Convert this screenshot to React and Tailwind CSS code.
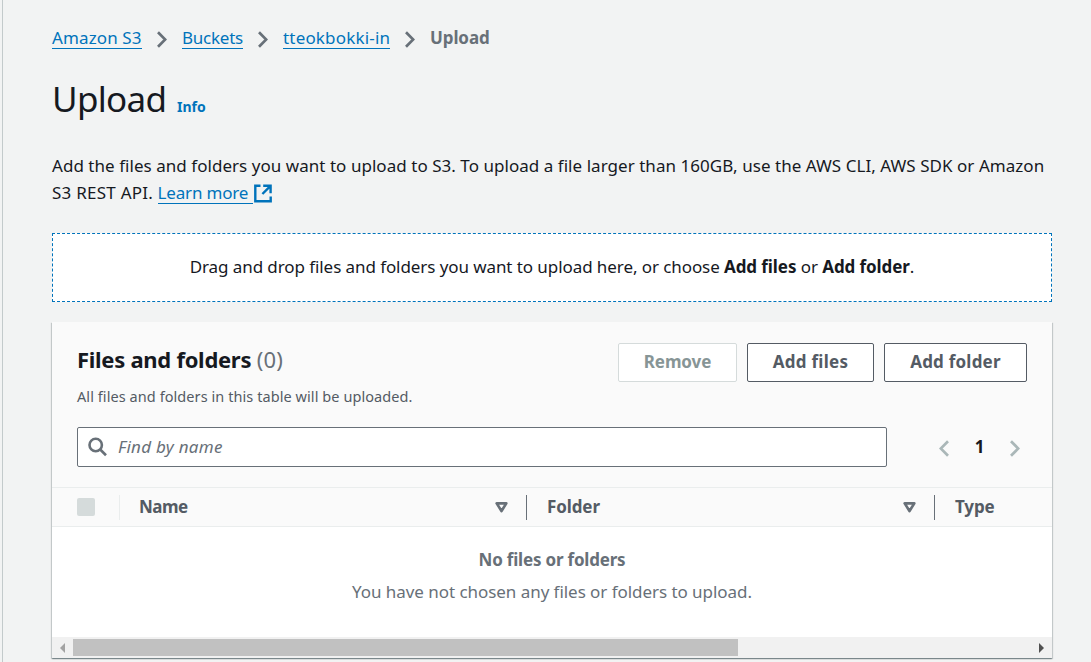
import React from "react";

function Chevron({ className = "", flip = false }) {
  return (
    <svg className={className} width="10" height="17" viewBox="0 0 10 17" fill="none" stroke="currentColor" strokeWidth="2.7">
      <path d={flip ? "M9 1.2L1.8 8.5L9 15.8" : "M1 1.2L8.2 8.5L1 15.8"} />
    </svg>
  );
}

function Crumb({ className, children }) {
  return (
    <a className={"h-[21px] shrink-0 whitespace-nowrap border-b border-[#0073bb] leading-[19px] text-[#0073bb] " + className}>
      {children}
    </a>
  );
}

function SortIcon() {
  return (
    <svg className="shrink-0" width="13" height="12" viewBox="0 0 13 12" fill="none" stroke="#687078" strokeWidth="2.7" strokeLinejoin="round">
      <path d="M1.7 2.4H11.3L6.5 10Z" />
    </svg>
  );
}

function Button({ className, children }) {
  return (
    <button className={"flex h-[39px] shrink-0 items-center justify-center whitespace-nowrap rounded-[2px] border bg-white pb-px font-bold " + className}>
      {children}
    </button>
  );
}

function Breadcrumbs() {
  return (
    <nav className="flex h-[21px] items-start">
      <Crumb className="w-[90px] tracking-[0.12px]">Amazon S3</Crumb>
      <Chevron className="ml-[15px] mt-[3px] text-[#687078]" />
      <Crumb className="ml-[15px] w-[61px] tracking-[-0.25px]">Buckets</Crumb>
      <Chevron className="ml-[15px] mt-[3px] text-[#687078]" />
      <Crumb className="ml-[15px] w-[107px] tracking-[0.18px]">tteokbokki-in</Crumb>
      <Chevron className="ml-[15px] mt-[3px] text-[#687078]" />
      <span className="ml-[15px] font-bold leading-[19px] tracking-[-0.1px] text-[#687078]">Upload</span>
    </nav>
  );
}

function FilesCard() {
  return (
    <section className="mt-5 flex h-[336px] w-[1000px] flex-col bg-white shadow-[0_1px_1px_0_rgba(0,28,36,0.3),1px_1px_1px_0_rgba(0,28,36,0.15),-1px_1px_1px_0_rgba(0,28,36,0.15)]">
      <div className="flex h-[165px] flex-col bg-[#fafafa] px-[25px] pt-[21px]">
        <div className="flex h-[63px] items-start">
          <div className="flex-1">
            <h2 className="h-[35px] whitespace-nowrap text-[22px] font-bold leading-[32px] tracking-[-0.28px] text-[#16191f]">
              Files and folders <span className="font-normal tracking-[0.25px] text-[#687078]">(0)</span>
            </h2>
            <p className="whitespace-nowrap text-[14.5px] leading-[36px] tracking-[0.07px] text-[#545b64]">
              All files and folders in this table will be uploaded.
            </p>
          </div>
          <div className="flex gap-[10px]">
            <Button className="w-[119px] border-[#d5dbdb] tracking-[-0.1px] text-[#879596]">Remove</Button>
            <Button className="w-[127px] border-[#545b64] tracking-[0.27px] text-[#545b64]">Add files</Button>
            <Button className="w-[143px] border-[#545b64] tracking-[0.22px] text-[#545b64]">Add folder</Button>
          </div>
        </div>
        <div className="mt-[21px] flex items-center">
          <div className="flex h-10 w-[810px] items-center rounded-[2px] border border-[#687078] bg-white">
            <svg className="ml-[10px]" width="20" height="20" viewBox="0 0 20 20" fill="none" stroke="#687078" strokeWidth="2.6">
              <circle cx="7.7" cy="8" r="6.2" />
              <path d="M12.2 12.5L18 18.2" />
            </svg>
            <span className="ml-[10px] pb-px italic tracking-[0.28px] text-[#687078]">Find by name</span>
          </div>
          <Chevron flip className="ml-[52px] mt-[2px] text-[#aab7b8]" />
          <span className="ml-[25px] w-[11px] text-center font-bold text-[#16191f]">1</span>
          <Chevron className="ml-[25px] mt-[2px] text-[#aab7b8]" />
        </div>
      </div>

      <div className="flex h-[40px] shrink-0 items-center border-y border-[#eaeded] bg-[#fafafa] font-bold text-[#545b64]">
        <span className="ml-[25px] h-[18px] w-[18px] rounded-[2px] bg-[#d5dbdb]" />
        <div className="ml-[24px] flex h-[25px] w-[407px] items-center border-l border-[#eaeded] pl-[19px] pr-[18px]">
          <span className="flex-1 tracking-[-0.5px]">Name</span>
          <SortIcon />
        </div>
        <div className="flex h-[25px] w-[408px] items-center border-l border-[#687078] pl-5 pr-[18px]">
          <span className="flex-1 tracking-[-0.1px]">Folder</span>
          <SortIcon />
        </div>
        <div className="flex h-[25px] items-center border-l border-[#687078] pl-5">
          <span className="tracking-[-0.1px]">Type</span>
        </div>
      </div>

      <div className="flex h-[110px] shrink-0 flex-col items-center pt-[17px] text-[#687078]">
        <p className="h-[32px] font-bold leading-[32px] tracking-[-0.2px]">No files or folders</p>
        <p className="leading-[32px] tracking-[-0.05px]">You have not chosen any files or folders to upload.</p>
      </div>

      <div className="flex h-[21px] items-center bg-[#f1f1f1]">
        <svg className="ml-2" width="5" height="10" viewBox="0 0 5 10" fill="#a3a3a3">
          <path d="M5 0V10L0 5Z" />
        </svg>
        <span className="ml-2 h-[17px] w-[665px] bg-[#c1c1c1]" />
        <svg className="ml-auto mr-2" width="5" height="10" viewBox="0 0 5 10" fill="#505050">
          <path d="M0 0V10L5 5Z" />
        </svg>
      </div>
    </section>
  );
}

export default function App() {
  return (
    <div className="flex h-[662px] w-[1091px] overflow-hidden bg-[#f2f3f3] font-['Noto_Sans','Open_Sans',sans-serif] text-[17px] text-[#16191f]">
      <div className="ml-[2px] w-px shrink-0 bg-[#c3cacb]" />
      <main className="ml-[49px] w-[1000px] shrink-0 pt-7">
        <Breadcrumbs />
        <div className="mt-[26px] flex h-[48px] items-baseline">
          <h1 className="w-[125px] text-[35px] leading-[48px] tracking-[-0.7px]">Upload</h1>
          <a className="text-[14px] font-bold text-[#0073bb]">Info</a>
        </div>
        <p className="mt-[29px] h-[81px] whitespace-nowrap leading-[27px] tracking-[0.04px]">
          Add the files and folders you want to upload to S3. To upload a file larger than 160GB, use the AWS CLI, AWS SDK or Amazon
          <br />
          <span className="tracking-[0.24px]">S3 REST API.</span>{" "}
          <a className="inline-block h-[22px] w-[95px] border-b border-[#0073bb] leading-[21px] tracking-[-0.17px] text-[#0073bb]">Learn more</a>
          <svg className="ml-px inline-block align-[-4px]" width="18" height="19" viewBox="0 0 18 19" fill="none" stroke="#0073bb" strokeWidth="2.4">
            <path d="M6.5 1.8H1.3V17.2H16.7V12.5" />
            <path d="M9.2 1.8H16.6V9.2M16 2.4L8.4 10" />
          </svg>
        </p>
        <div className="flex h-[69px] items-center justify-center whitespace-pre border border-dashed border-[#0073bb] bg-white pb-px tracking-[-0.08px]">
          Drag and drop files and folders you want to upload here, or choose <b>Add files</b> or <b>Add folder</b>.
        </div>
        <FilesCard />
      </main>
    </div>
  );
}
